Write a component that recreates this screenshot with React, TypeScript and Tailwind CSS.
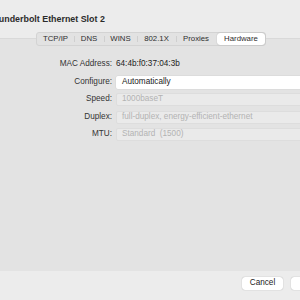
import React from 'react';

const tabs = [
  { name: 'TCP/IP', w: 'w-[37px]' },
  { name: 'DNS', w: 'w-[30px]' },
  { name: 'WINS', w: 'w-[33px]' },
  { name: '802.1X', w: 'w-[39px]' },
  { name: 'Proxies', w: 'w-[40px]' },
];

function Row(props: { label: string; children: React.ReactNode }) {
  return (
    <div className="flex items-center h-[13px]">
      <div className="w-[113px] shrink-0 text-right pr-[1px] text-[#333] whitespace-nowrap">{props.label}</div>
      <div className="ml-[3px] shrink-0 h-full flex items-center">{props.children}</div>
    </div>
  );
}

function Field(props: { value: string; enabled?: boolean }) {
  return props.enabled ? (
    <div className="w-[200px] h-full bg-white rounded-[2px] shadow-[0_0_0_0.5px_#d6d6d6] flex items-center pl-[6px] text-[#222] whitespace-nowrap">
      {props.value}
    </div>
  ) : (
    <div className="w-[200px] h-full bg-[#eaeaea] rounded-[2px] border border-[#dddddd] flex items-center pl-[5px] text-[#b3b3b3] whitespace-pre">
      {props.value}
    </div>
  );
}

export default function App() {
  return (
    <div className="w-[300px] h-[300px] bg-[#ececec] overflow-hidden flex flex-col text-[8.2px] font-['Liberation_Sans',Arial,sans-serif]">
      <div className="h-[38px] pt-[14px] shrink-0">
        <div className="-ml-[12px] text-[8.9px] font-semibold text-[#2b2b2b] leading-[10px] whitespace-nowrap">
          Thunderbolt Ethernet Slot 2
        </div>
      </div>

      <div className="relative h-[233px] shrink-0 bg-[#e3e3e3] border-t border-[#d9d9d9] pt-[19px]">
        <div className="absolute left-[36px] -top-[7px] h-[14px] w-[230px] bg-[#e2e2e2] rounded-[3px] border border-[#d3d3d3] flex items-center text-[7.8px] text-[#2e2e2e]">
          {tabs.map((t, i) => (
            <div key={t.name} className={`${t.w} h-full flex items-center justify-center relative`}>
              {i > 0 && <span className="absolute left-0 top-[3px] bottom-[3px] w-px bg-[#cfcfcf]"></span>}
              {t.name}
            </div>
          ))}
          <div className="w-[48px] h-[12px] ml-[1px] bg-white rounded-[3px] shadow-[0_0_1px_rgba(0,0,0,0.35)] flex items-center justify-center">
            Hardware
          </div>
        </div>

        <div className="flex flex-col gap-[4.5px]">
          <Row label="MAC Address:">
            <span className="text-[#222]">64:4b:f0:37:04:3b</span>
          </Row>
          <Row label="Configure:">
            <Field value="Automatically" enabled />
          </Row>
          <Row label="Speed:">
            <Field value="1000baseT" />
          </Row>
          <Row label="Duplex:">
            <Field value="full-duplex, energy-efficient-ethernet" />
          </Row>
          <Row label="MTU:">
            <Field value="Standard  (1500)" />
          </Row>
        </div>
      </div>

      <div className="flex pt-[6px] pl-[242px] gap-[8px]">
        <div className="w-[41px] h-[13px] shrink-0 bg-white rounded-[3px] shadow-[0_0_1px_rgba(0,0,0,0.4)] flex items-center justify-center text-[#222]">
          Cancel
        </div>
        <div className="w-[41px] h-[13px] shrink-0 bg-white rounded-[3px] shadow-[0_0_1px_rgba(0,0,0,0.4)]"></div>
      </div>
    </div>
  );
}
